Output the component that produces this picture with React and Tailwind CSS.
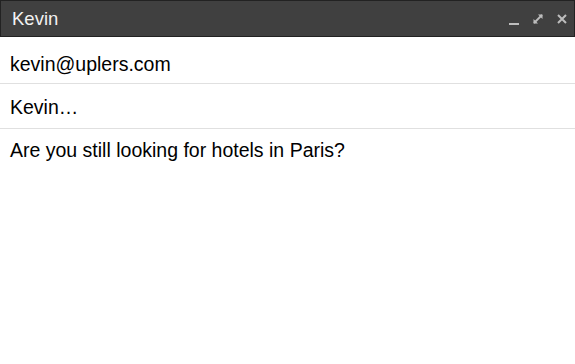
export default function App() {
  return (
    <div className="w-[575px] h-[364px] bg-white flex flex-col" style={{ fontFamily: '"Liberation Sans", Arial, sans-serif' }}>
      <div className="h-[37px] bg-[#404040] border border-[#222] flex items-center pl-[11px] pr-[5px]">
        <span className="text-[18.5px] text-[#f2f2f2] flex-1 leading-none pt-[1px]">Kevin</span>
        <div className="flex items-center gap-[10px] text-[#bdbdbd]">
          <svg width="14" height="14" viewBox="0 0 14 14" className="mt-[2px]">
            <rect x="2" y="10" width="10" height="2" fill="#bdbdbd" />
          </svg>
          <svg width="14" height="14" viewBox="0 0 14 14">
            <path d="M3 11 L11 3" stroke="#bdbdbd" strokeWidth="1.8" />
            <path d="M7 2.5 H11.5 V7 Z" fill="#bdbdbd" />
            <path d="M2.5 7 V11.5 H7 Z" fill="#bdbdbd" />
          </svg>
          <svg width="14" height="14" viewBox="0 0 14 14">
            <path d="M3 3 L11 11 M11 3 L3 11" stroke="#bdbdbd" strokeWidth="2" />
          </svg>
        </div>
      </div>
      <div className="h-[47px] border-b border-[#e0e0e0] flex items-center px-[10px] pt-[9px] text-[19.5px] text-black">
        kevin@uplers.com
      </div>
      <div className="h-[45px] border-b border-[#e0e0e0] flex items-center px-[10px] pt-[4px] text-[19.5px] text-black">
        Kevin…
      </div>
      <div className="px-[10px] pt-[10px] text-[19.5px] text-black leading-[22px]">
        Are you still looking for hotels in Paris?
      </div>
    </div>
  );
}
